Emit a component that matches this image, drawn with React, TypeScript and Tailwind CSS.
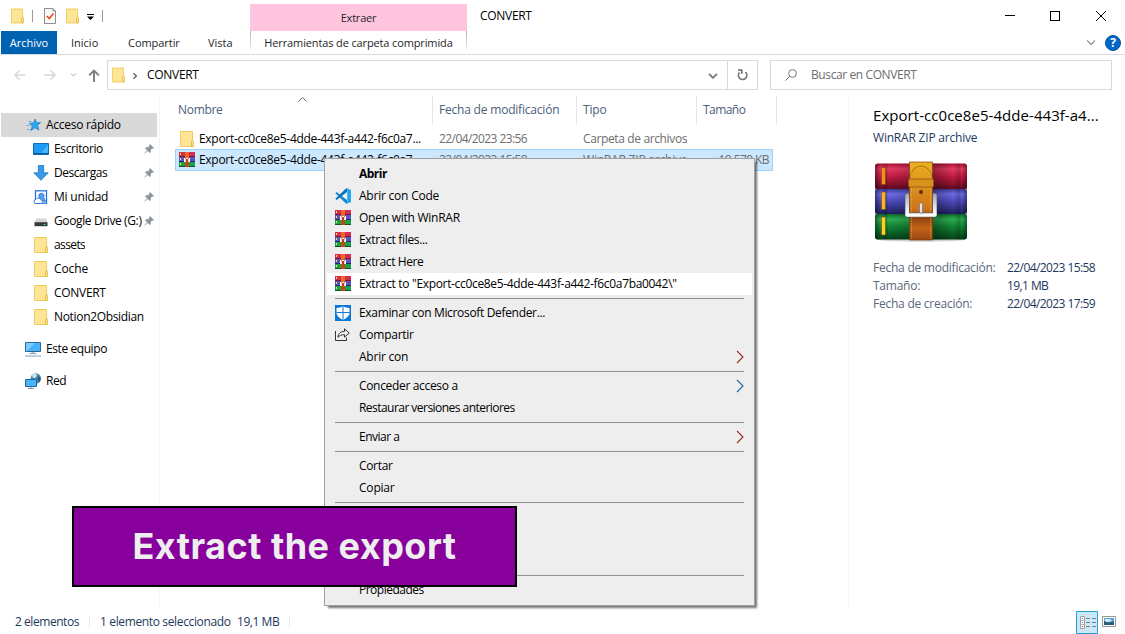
import { ReactNode } from "react";

const separator = "h-7 w-px bg-[#e5e5e5]";

function Folder({ className = "h-4 w-3.5" }: { className?: string }) {
  return (
    <svg viewBox="0 0 14 16" className={className + " shrink-0"}>
      <path d="M.5.5h12v9.5l.5.5v5H.5z" fill="#ffe596" stroke="#f0cb5c" />
      <path d="M11.500 15.500V10l1-.8.8.8v5.500z" fill="#ffe9a8" stroke="#e8bd42" />
    </svg>
  );
}

function Books() {
  return (
    <svg viewBox="0 0 16 16" className="h-4 w-4 shrink-0" shapeRendering="crispEdges">
      <path d="M0 0h16v4H0z" fill="#d42d55" />
      <path d="M0 4h16v1H0z" fill="#7e1630" />
      <path d="M0 5h16v4H0z" fill="#5754c4" />
      <path d="M0 9h16v1H0z" fill="#292866" />
      <path d="M0 10h16v4H0z" fill="#16a34a" />
      <path d="M0 14h16v1H0z" fill="#0b5527" />
      <path d="M1 1h1v2H1zM1 6h1v2H1zM1 11h1v2H1z" fill="#ffd84a" />
      <path d="M6 0h4v15H6z" fill="#ee6a1e" />
      <path d="M6 10h4v5H6z" fill="#c24a12" />
      <path d="M5 6h1v4H5zM10 6h1v4h-1zM7 6h2v1H7z" fill="#fff" />
      <path d="M6 7h1v3H6zM9 7h1v3H9z" fill="#e9dfe4" />
      <path d="M7 7h2v3H7z" fill="#c8331d" />
    </svg>
  );
}

function BigBooks() {
  return (
    <svg viewBox="0 0 96 84" className="mt-3 ml-[-1px] h-[84px] w-24">
      <defs>
        <linearGradient id="red" x2="0" y2="1">
          <stop stopColor="#a91436" />
          <stop offset=".2" stopColor="#e63a62" />
          <stop offset=".5" stopColor="#c51c42" />
          <stop offset="1" stopColor="#5e0b20" />
        </linearGradient>
        <linearGradient id="blue" x2="0" y2="1">
          <stop stopColor="#3d3c9c" />
          <stop offset=".2" stopColor="#6e6ce6" />
          <stop offset=".55" stopColor="#4846b2" />
          <stop offset="1" stopColor="#1f1e5c" />
        </linearGradient>
        <linearGradient id="green" x2="0" y2="1">
          <stop stopColor="#0c6c2c" />
          <stop offset=".2" stopColor="#2fb052" />
          <stop offset=".5" stopColor="#108534" />
          <stop offset="1" stopColor="#053f18" />
        </linearGradient>
        <linearGradient id="strap" x2="0" y2="1">
          <stop stopColor="#eab01e" />
          <stop offset=".3" stopColor="#dc921c" />
          <stop offset=".6" stopColor="#d07418" />
          <stop offset=".72" stopColor="#8f4310" />
          <stop offset=".85" stopColor="#c46318" />
          <stop offset="1" stopColor="#94460f" />
        </linearGradient>
        <linearGradient id="silver" x2="0" y2="1">
          <stop stopColor="#a9afb9" />
          <stop offset=".5" stopColor="#d9dde4" />
          <stop offset="1" stopColor="#ffffff" />
        </linearGradient>
        <linearGradient id="ends">
          <stop stopColor="#000" stopOpacity=".45" />
          <stop offset=".06" stopColor="#000" stopOpacity="0" />
          <stop offset=".12" stopColor="#000" stopOpacity=".2" />
          <stop offset=".15" stopColor="#000" stopOpacity="0" />
          <stop offset=".62" stopColor="#000" stopOpacity=".35" />
          <stop offset=".85" stopColor="#000" stopOpacity="0" />
          <stop offset=".92" stopColor="#000" stopOpacity=".2" />
          <stop offset=".94" stopColor="#000" stopOpacity="0" />
          <stop offset="1" stopColor="#000" stopOpacity=".4" />
        </linearGradient>
      </defs>
      <ellipse cx="49" cy="79.500" rx="45" ry="2.200" fill="#000" opacity=".18" />
      <rect x="3" y="3.500" width="92" height="26" rx="3" fill="url(#red)" />
      <rect x="3" y="29" width="92" height="25" rx="3" fill="url(#blue)" />
      <rect x="3" y="54" width="92" height="25.500" rx="3" fill="url(#green)" />
      <rect x="3" y="3.500" width="92" height="76" rx="3" fill="url(#ends)" />
      <path d="M9.500 7.500h4v17h-4z" fill="#f0921c" />
      <path d="M9.500 32h4v17.500h-4z" fill="#f7b81e" />
      <path d="M9.500 57h4v18h-4z" fill="#f7d41e" />
      <path d="M9.500 7.500h4v17h-4zM9.500 32h4v17.500h-4zM9.500 57h4v18h-4z" fill="none" stroke="#6e3b10" strokeWidth=".5" />
      <path d="M37.500 2h23v78h-23z" fill="url(#strap)" stroke="#7a3c0c" strokeWidth=".7" />
      <path d="M38 18c2-16 20-16 22 0" fill="none" stroke="#a9701a" />
      <path d="M39.500 3v76M58.500 3v76" stroke="#f2bd5c" strokeWidth=".5" strokeDasharray="1.500 1" />
      <rect x="36.500" y="19" width="25" height="8" rx="1" fill="#d9911d" stroke="#8f5414" strokeWidth=".8" />
      <circle cx="49" cy="32" r="2" fill="#5e2c0d" />
      <path d="M37 35.500h-1.800v19.500h27.600V35.500H61" fill="none" stroke="#596070" strokeWidth="4.600" strokeLinejoin="round" />
      <path d="M37 35.500h-1.800v19.500h27.600V35.500H61" fill="none" stroke="url(#silver)" strokeWidth="3.700" strokeLinejoin="round" />
      <path d="M49 44.500v7" stroke="#6b6d77" strokeWidth="4" strokeLinecap="round" />
      <path d="M49 44.500v7" stroke="#dfe2e8" strokeWidth="2.500" strokeLinecap="round" />
    </svg>
  );
}

function Star() {
  return (
    <svg viewBox="0 0 16 16" className="h-4 w-4 shrink-0">
      <path d="M9.200 2l1.200 3.700 4.300-.2-3.100 2.900 1.200 4.700-3.900-2.300-4 2.800 1.400-4.800-3-2.400 4.200-.5z" fill="#2ba4ec" stroke="#2384c9" strokeWidth=".8" />
      <path d="M2.500 4.500h3M.5 8.500h3M1 12.500h3" stroke="#5aaadf" strokeWidth=".9" />
    </svg>
  );
}

function Desktop() {
  return (
    <svg viewBox="0 0 16 16" className="h-4 w-4 shrink-0">
      <path d="M.5 2.500h15v11H.5z" fill="#1a9cf5" stroke="#0a6cb4" />
      <path d="M7 13l8-9v9z" fill="#45b5ff" />
      <path d="M1 12.500h14" stroke="#0b5a98" />
    </svg>
  );
}

function Download() {
  return (
    <svg viewBox="0 0 16 16" className="h-4 w-4 shrink-0">
      <path d="M5.300.5h5.400v7.300h4.500L8 15.300.8 7.800h4.500z" fill="#3a96e6" stroke="#2277c4" strokeWidth=".8" />
    </svg>
  );
}

function DriveFolder() {
  return (
    <svg viewBox="0 0 16 16" className="h-4 w-4 shrink-0">
      <rect x="2.500" y="1.800" width="11" height="12.400" fill="#fff" stroke="#2272de" strokeWidth="1.300" />
      <path d="M8.300 4.200a2.600 2.600 0 012.300 4.200l2 3.800H10L8.500 9.500a2.600 2.600 0 01-.2-5.300z" fill="#5b9bf0" stroke="#2272de" strokeWidth=".8" />
      <path d="M3 14.500a2 2 0 010-4 2.600 2.600 0 014.800.4 1.900 1.900 0 01.5 3.600z" fill="#fff" stroke="#2272de" strokeWidth=".9" />
    </svg>
  );
}

function Drive() {
  return (
    <svg viewBox="0 0 16 16" className="h-4 w-4 shrink-0">
      <path d="M3.500 5.500h9.500l1.500 4h-13z" fill="#d4d4d4" />
      <path d="M1.500 9.200h13v4h-13z" fill="#383838" />
      <path d="M10.500 11h2v1h-2z" fill="#39e05c" />
    </svg>
  );
}

function Computer() {
  return (
    <svg viewBox="0 0 16 16" className="h-4 w-4 shrink-0">
      <path d="M.5 1.500h15v9H.5z" fill="#45b2fb" stroke="#27689a" />
      <path d="M1 2h9l-8 8H1z" fill="#7dcbff" />
      <path d="M6.500 11h3v1.500h-3z" fill="#b7c3cd" />
      <path d="M4.500 12.600h7M0 15h16" stroke="#869db2" />
    </svg>
  );
}

function Network() {
  return (
    <svg viewBox="0 0 16 16" className="h-4 w-4 shrink-0">
      <circle cx="10.800" cy="5.500" r="5.200" fill="#4c87a8" />
      <path d="M6.500 3c1-2 3-2.600 4.500-2.500L12 3 9.500 5.500z" fill="#c4e4ef" />
      <path d="M13 3l2.800 2-1 4-2-2z" fill="#27597d" />
      <path d="M.5 6.500h11v7H.5z" fill="#48b5fb" stroke="#246998" />
      <path d="M3 15.500h6M6 14v1" stroke="#8395a4" />
    </svg>
  );
}

function Pin() {
  return (
    <svg viewBox="0 0 10 10" className="h-2.5 w-2.5 shrink-0">
      <path d="M6 0l4 4-1 .7-.8-.2L6.700 6l.1 2-1 1L3.600 6.900.5 9.700.2 9.400 3 6.300 1 4.200l1-1 2 .1 1.500-1.500-.2-1z" fill="#8b959e" />
    </svg>
  );
}

function Shield() {
  return (
    <svg viewBox="0 0 16 16" className="h-4 w-4 shrink-0">
      <path d="M0 0h16v16H0z" fill="#0a78d6" />
      <path d="M8 1.300c2 1.200 4 1.700 6.500 1.700v4.500c0 3.400-3 5.800-6.500 7.400-3.500-1.600-6.500-4-6.500-7.400V3c2.500 0 4.500-.5 6.500-1.700z" fill="#fff" />
      <path d="M8 1v14M1.500 7.500h13" stroke="#0a78d6" />
    </svg>
  );
}

function Code() {
  return (
    <svg viewBox="0 0 16 16" className="h-4 w-4 shrink-0">
      <path d="M.4 5.200l1.200-1.100L12 12v3.500l-.8.300z" fill="#1387cf" />
      <path d="M.4 10.800l1.200 1.100L12 4V.5L11.200.2z" fill="#0873b9" />
      <path d="M11.400.1L16 2v12l-4.600 1.900c.6-.3.800-.6.800-1.200V1.300c0-.6-.2-.9-.8-1.200z" fill="#25a4f0" />
    </svg>
  );
}

function Share() {
  return (
    <svg viewBox="0 0 16 16" className="h-4 w-4 shrink-0" fill="none" stroke="#333">
      <path d="M.500 4v9.500h11v-3" />
      <path d="M3 10.300c.3-4 2.700-5.800 6.500-5.900V1.800L14.200 6 9.500 10.200V7.700C6.500 7.700 4.700 8.500 3 10.300z" />
    </svg>
  );
}

const quickAccess: [ReactNode, string, string, boolean][] = [
  [<Desktop />, "Escritorio", "tracking-[-0.38px]", true],
  [<Download />, "Descargas", "tracking-[-0.45px]", true],
  [<DriveFolder />, "Mi unidad", "tracking-[-0.2px]", true],
  [<Drive />, "Google Drive (G:)", "tracking-[-0.38px]", true],
  [<Folder />, "assets", "tracking-[-0.6px]", false],
  [<Folder />, "Coche", "tracking-[-0.1px]", false],
  [<Folder />, "CONVERT", "tracking-[-0.3px]", false],
  [<Folder />, "Notion2Obsidian", "tracking-[-0.33px]", false],
];

function MenuItem({
  icon,
  label,
  tone = "",
  text = "tracking-[-0.33px]",
  arrow = "",
}: {
  icon?: ReactNode;
  label: string;
  tone?: string;
  text?: string;
  arrow?: string;
}) {
  return (
    <div className={"mx-0.5 flex h-[22px] items-center pr-2 pl-2 " + tone}>
      <span className="flex w-6 shrink-0">{icon}</span>
      <span className={"flex-1 " + text}>{label}</span>
      {arrow && (
        <svg viewBox="0 0 8 14" className={"h-3.5 w-2 " + arrow} fill="none" stroke="currentColor" strokeWidth="1.100">
          <path d="M1 1l6 6-6 6" />
        </svg>
      )}
    </div>
  );
}

function MenuLine() {
  return (
    <div className="mr-2.5 ml-2.5 flex h-[7px] items-start pt-[3px]">
      <div className="h-px w-full bg-[#919191]" />
    </div>
  );
}

function ContextMenu() {
  return (
    <div className="absolute top-[158px] left-[324px] h-[448px] w-[431px] border border-[#a0a0a0] bg-[#eeeeee] pt-1 text-black shadow-[3px_3px_2px_-1px_rgba(0,0,0,0.55)]">
      <MenuItem label="Abrir" text="font-bold tracking-[-0.5px]" />
      <MenuItem icon={<Code />} label="Abrir con Code" text="tracking-[-0.22px]" />
      <MenuItem icon={<Books />} label="Open with WinRAR" text="tracking-[-0.25px]" />
      <MenuItem icon={<Books />} label="Extract files..." />
      <MenuItem icon={<Books />} label="Extract Here" text="tracking-[-0.4px]" />
      <MenuItem icon={<Books />} label={'Extract to "Export-cc0ce8e5-4dde-443f-a442-f6c0a7ba0042\\"'} tone="bg-white" />
      <MenuLine />
      <MenuItem icon={<Shield />} label="Examinar con Microsoft Defender..." />
      <MenuItem icon={<Share />} label="Compartir" text="tracking-[-0.25px]" />
      <MenuItem label="Abrir con" text="tracking-[-0.22px]" arrow="text-[#a5281b]" />
      <MenuLine />
      <MenuItem label="Conceder acceso a" arrow="text-[#1b66a5]" />
      <MenuItem label="Restaurar versiones anteriores" text="tracking-[-0.54px]" />
      <MenuLine />
      <MenuItem label="Enviar a" text="tracking-[-0.5px]" arrow="text-[#a5281b]" />
      <MenuLine />
      <MenuItem label="Cortar" />
      <MenuItem label="Copiar" text="tracking-[-0.2px]" />
      <MenuLine />
      <div className="h-[66px]" />
      <MenuLine />
      <MenuItem label="Propiedades" text="tracking-[-0.5px]" />
    </div>
  );
}

function TitleBar() {
  return (
    <header className="flex h-[54px] shrink-0">
      <div className="flex w-[250px] flex-col">
        <div className="flex h-[31px] items-center pl-[11px]">
          <Folder className="h-4 w-[13px]" />
          <span className="ml-2 h-3 w-px bg-[#999]" />
          <svg viewBox="0 0 12 16" className="ml-[11px] h-4 w-3" fill="none">
            <path d="M.5.500h8.500l2.500 2.500v12.500H.5z" fill="#fafafa" stroke="#8c8c8c" />
            <path d="M9 .5V3h2.500" stroke="#8c8c8c" />
            <path d="M2.800 8l2.400 2.500 4.300-5" stroke="#e8501e" strokeWidth="1.700" />
          </svg>
          <Folder className="ml-2.5 h-4 w-[13px]" />
          <svg viewBox="0 0 7 6" className="mt-[3px] ml-2 h-1.5 w-[7px]">
            <path d="M0 0h7v1H0zM0 2.500h7L3.500 6z" fill="#000" />
          </svg>
          <span className="ml-2 h-3 w-px bg-[#999]" />
        </div>
        <div className="flex h-[23px] items-center pl-px text-[11px] text-[#262626]">
          <span className="flex h-full w-14 items-center justify-center bg-[#0063b1] text-white">Archivo</span>
          <span className="ml-3.5 w-[57px]">Inicio</span>
          <span className="w-20 tracking-[-0.05px]">Compartir</span>
          <span>Vista</span>
        </div>
      </div>
      <div className="mt-1 flex w-[217px] flex-col text-center text-[11px] text-[#262626]">
        <div className="flex h-[27px] items-center justify-center bg-[#ffc5de] tracking-[-0.2px]">Extraer</div>
        <div className="flex h-[23px] justify-between">
          <span className="h-[19px] w-px bg-gradient-to-b from-[#b5b5b5] to-[#eeeeee]" />
          <span className="leading-[23px] tracking-[-0.13px]">Herramientas de carpeta comprimida</span>
          <span className="h-[19px] w-px bg-gradient-to-b from-[#b5b5b5] to-[#eeeeee]" />
        </div>
      </div>
      <div className="ml-[13px] flex h-[31px] flex-1 items-center text-black">
        <span className="tracking-[-0.3px]">CONVERT</span>
      </div>
      <div className="flex w-[125px] flex-col">
        <div className="flex h-[31px] items-center pl-[5px]">
          <span className="h-px w-2.5 bg-black" />
          <span className="ml-[35px] h-2.5 w-2.5 border border-black" />
          <svg viewBox="0 0 10 10" className="ml-9 h-2.5 w-2.5" stroke="#000">
            <path d="M0 0l10 10M10 0L0 10" />
          </svg>
        </div>
        <div className="flex h-[23px] items-center pl-[87px]">
          <svg viewBox="0 0 8 5" className="h-[5px] w-2" fill="none" stroke="#8d8d8d" strokeWidth="1.200">
            <path d="M0 .500l4 4 4-4" />
          </svg>
          <span className="ml-2.5 flex h-4 w-4 items-center justify-center rounded-full border border-[#07539b] bg-[#0067c8] text-[12px] font-bold text-white">?</span>
        </div>
      </div>
    </header>
  );
}

function AddressBar() {
  return (
    <div className="flex h-[42px] shrink-0 items-start border-t border-[#dadada] pt-[5px]">
      <div className="flex h-[30px] w-[107px] items-center pl-3.5">
        <svg viewBox="0 0 88 14" className="h-3.5 w-[88px]" fill="none" strokeWidth="1.600">
          <path d="M11 7H1M5.500 2.500L1 7l4.500 4.500M30 7h11M36.500 2.500L41 7l-4.500 4.500" stroke="#d8d8d8" />
          <path d="M57 5.500L59.500 8 62 5.500" stroke="#d0d0d0" strokeWidth="1.200" />
          <path d="M80 14V2.500M75.200 7.300L80 2.500l4.800 4.800" stroke="#7c7c7c" strokeWidth="1.900" />
        </svg>
      </div>
      <div className="flex h-[30px] w-[651px] items-center border border-[#d9d9d9] pl-1">
        <Folder className="h-4 w-[13px]" />
        <svg viewBox="0 0 5 8" className="mt-px ml-2 h-2 w-[5px]" fill="none" stroke="#666" strokeWidth="1.500">
          <path d="M.5 1.200L3.300 4 .5 6.800" />
        </svg>
        <span className="ml-[9px] flex-1 tracking-[-0.3px]">CONVERT</span>
        <svg viewBox="0 0 10 6" className="mt-0.5 mr-[9px] h-1.5 w-2.5" fill="none" stroke="#777" strokeWidth="1.800">
          <path d="M1 .800l4 4 4-4" />
        </svg>
        <span className="h-7 w-px bg-[#d9d9d9]" />
        <svg viewBox="0 0 11 12" className="mr-[9px] ml-[9px] h-3 w-[11px]" fill="none" stroke="#777" strokeWidth="1.700">
          <path d="M8.500 3.200a4.200 4.200 0 11-6 .3M1 1.200h3.800v3.600" />
        </svg>
      </div>
      <div className="ml-3 flex h-[30px] w-[342px] items-center border border-[#d9d9d9] pl-3.5 text-[#6d6d6d]">
        <svg viewBox="0 0 12 12" className="h-3 w-3" fill="none" stroke="#777">
          <circle cx="7.500" cy="4.500" r="3.900" />
          <path d="M4.700 7.300L.3 11.700" />
        </svg>
        <span className="ml-3.5 tracking-[-0.4px]">Buscar en CONVERT</span>
      </div>
    </div>
  );
}

function Sidebar() {
  return (
    <nav className="flex w-40 shrink-0 flex-col border-r border-[#f5f5f5] pt-[17px] pl-px">
      <div className="flex h-6 w-[156px] items-center gap-1 bg-[#d9d9d9] pl-[25px]">
        <Star />
        <span className="tracking-[-0.28px]">Acceso rápido</span>
      </div>
      {quickAccess.map(([icon, name, tracking, pinned]) => (
        <div key={name} className="flex h-6 items-center pl-8">
          <span className="flex w-4 justify-center">{icon}</span>
          <span className={"ml-[5px] overflow-hidden whitespace-nowrap " + (pinned ? "w-[88px] " : "") + tracking}>{name}</span>
          {pinned && <span className="ml-0.5"><Pin /></span>}
        </div>
      ))}
      <div className="mt-2 flex h-6 items-center gap-1 pl-6">
        <Computer />
        <span className="ml-px tracking-[-0.42px]">Este equipo</span>
      </div>
      <div className="mt-2 flex h-6 items-center gap-1 pl-6">
        <Network />
        <span className="ml-px tracking-[-0.4px]">Red</span>
      </div>
    </nav>
  );
}

function FileRow({ icon, date, type, size, selected }: { icon: ReactNode; date: string; type: string; size?: string; selected?: boolean }) {
  return (
    <div
      className={
        "flex w-[598px] items-center border pl-[3px] text-[#6d6d6d] " +
        (selected ? "h-[22px] border-[#99d1ff] bg-[#cce8ff]" : "h-[21px] border-transparent")
      }
    >
      <span className="flex w-4 justify-center">{icon}</span>
      <span className="ml-1 w-60 tracking-[-0.3px] text-black">Export-cc0ce8e5-4dde-443f-a442-f6c0a7...</span>
      <span className="w-36 tracking-[-0.58px]">{date}</span>
      <span className={"w-[120px] " + (selected ? "tracking-[-0.2px]" : "tracking-[-0.37px]")}>{type}</span>
      <span className="flex-1 pr-[3px] text-right tracking-[-0.58px]">{size}</span>
    </div>
  );
}

function FileList() {
  return (
    <main className="flex w-[688px] shrink-0 flex-col pl-[15px]">
      <div className="flex h-7 items-center text-[#4c607a]">
        <span className="flex w-[257px] items-center pl-[3px]">
          <span className="w-[120px] tracking-[-0.3px]">Nombre</span>
          <svg viewBox="0 0 9 5" className="mb-[21px] h-[5px] w-[9px]" fill="none" stroke="#666">
            <path d="M.5 4.500l4-4 4 4" />
          </svg>
        </span>
        <span className={separator} />
        <span className="w-[143px] pl-1.5 tracking-[-0.2px]">Fecha de modificación</span>
        <span className={separator} />
        <span className="w-[119px] pl-1.5 tracking-[-0.2px]">Tipo</span>
        <span className={separator} />
        <span className="w-[79px] pl-1.5 tracking-[-0.55px]">Tamaño</span>
        <span className={separator} />
      </div>
      <div className="mt-1 flex flex-col">
        <FileRow icon={<Folder />} date="22/04/2023 23:56" type="Carpeta de archivos" />
        <FileRow icon={<Books />} date="22/04/2023 15:58" type="WinRAR ZIP archive" size="19.579 KB" selected />
      </div>
    </main>
  );
}

function Details() {
  const rows = [
    ["Fecha de modificación:", "22/04/2023 15:58"],
    ["Tamaño:", "19,1 MB"],
    ["Fecha de creación:", "22/04/2023 17:59"],
  ];
  return (
    <aside className="flex flex-1 flex-col border-l border-[#f5f5f5] pt-[7px] pl-6">
      <span className="text-[15px] leading-6 tracking-[0.05px] text-black">Export-cc0ce8e5-4dde-443f-a4...</span>
      <span className="mt-px leading-5 tracking-[-0.2px] text-[#1e395b]">WinRAR ZIP archive</span>
      <BigBooks />
      <div className="mt-[15px] grid grid-cols-[134px_1fr] leading-[18px]">
        {rows.map(([label, value]) => (
          <div key={label} className="contents">
            <span className="tracking-[-0.24px] text-[#5a6779]">{label}</span>
            <span className="tracking-[-0.58px] text-[#1e395b]">{value}</span>
          </div>
        ))}
      </div>
    </aside>
  );
}

function StatusBar() {
  return (
    <footer className="flex h-6 shrink-0 items-center pl-[15px] text-[#1e395b]">
      <span className="w-[74px] tracking-[-0.45px]">2 elementos</span>
      <span className="h-3 w-px bg-[#ececec]" />
      <span className="ml-2.5 w-[137px] tracking-[-0.36px]">1 elemento seleccionado</span>
      <span className="w-[52px] tracking-[-0.45px]">19,1 MB</span>
      <span className="h-3 w-px bg-[#ececec]" />
      <span className="flex-1" />
      <svg viewBox="0 0 48 23" className="mr-px h-[23px] w-12" fill="none">
        <path d="M.5.500h21v22H.5z" fill="#cce8f6" stroke="#26a0da" />
        <path d="M4.500 5.500h4v12h-4z" fill="#fff" stroke="#a0a0a0" />
        <path d="M5 9.500h3M5 13.500h3" stroke="#b8b8b8" />
        <path d="M6 7h1v1H6z" fill="#557799" />
        <path d="M6 11h1v1H6z" fill="#2a8ae0" />
        <path d="M6 15h1v1H6z" fill="#d02828" />
        <path d="M10 7.500h4M10 11.500h4M10 15.500h4M16 7.500h4M16 11.500h4M16 15.500h4" stroke="#75828c" />
        <path d="M26.500 5.500h13v10h-13z" fill="#fff" stroke="#999" />
        <path d="M28 7h10v7H28z" fill="#5b9fe0" />
        <path d="M29 8h5l2 2-4 1h-3z" fill="#d5e9f7" />
        <path d="M28 10l4 1.500 6-1V14H28z" fill="#285d76" />
      </svg>
    </footer>
  );
}

export default function App() {
  return (
    <div className="relative flex h-[634px] w-[1125px] flex-col overflow-hidden bg-white font-['Open_Sans','Noto_Sans',sans-serif] text-[12px] leading-4 whitespace-nowrap text-black">
      <TitleBar />
      <AddressBar />
      <div className="flex h-[514px] shrink-0">
        <Sidebar />
        <FileList />
        <Details />
      </div>
      <StatusBar />
      <ContextMenu />
      <div className="absolute top-[506px] left-[72px] flex h-[81px] w-[445px] items-center justify-center border-2 border-black bg-[#88009b] pb-0.5 font-['Inter',sans-serif] text-[36px] font-bold tracking-[0.5px] text-[#eeeeee]">
        Extract the export
      </div>
    </div>
  );
}
